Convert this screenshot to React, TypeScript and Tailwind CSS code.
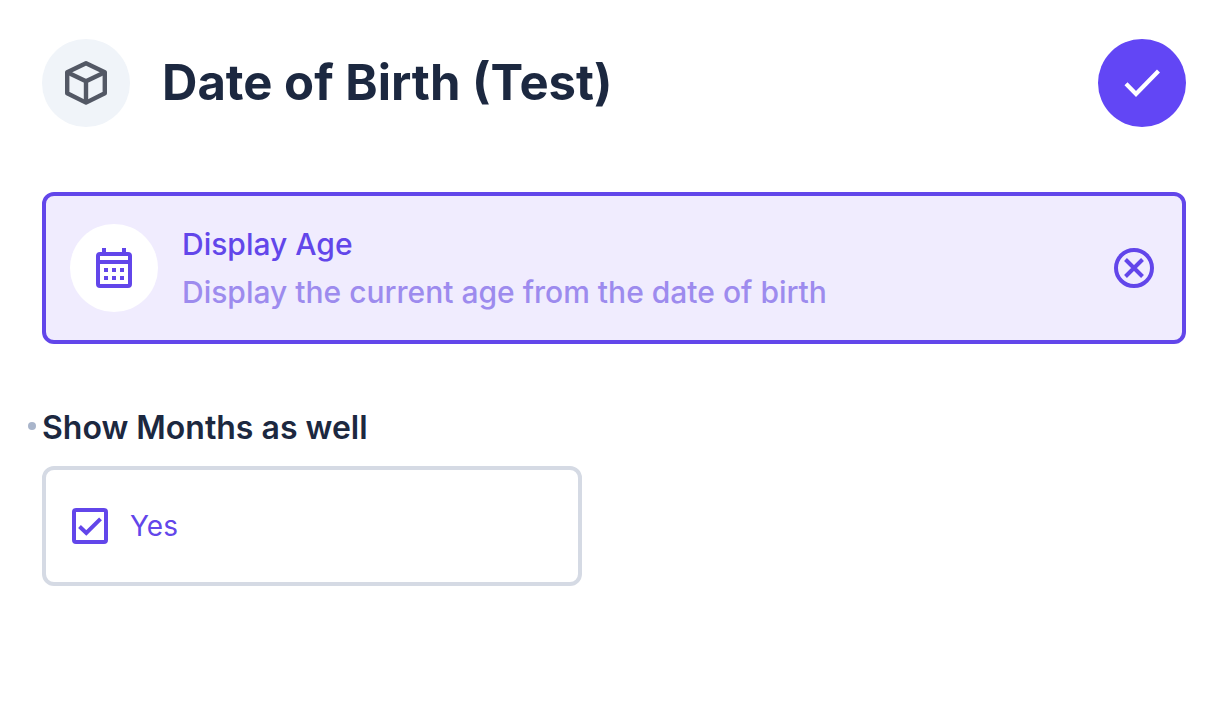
import { useState } from "react";

function CubeIcon() {
  return (
    <svg viewBox="0 0 44 46" className="h-[46px] w-11" fill="none" stroke="#535865" strokeWidth="4.4" strokeLinejoin="round" aria-hidden="true">
      <path d="M22 3.3 40.8 12.3V33.2L22 42.6 3.2 33.2V12.3Z" />
      <path d="M3.2 12.3 22 21.3 40.8 12.3M22 21.3V42.6" />
    </svg>
  );
}

function CheckIcon() {
  return (
    <svg viewBox="0 0 44 44" className="size-11" fill="none" stroke="#fff" strokeWidth="4.2" aria-hidden="true">
      <path d="M6 22.8 16 33 38.5 10" />
    </svg>
  );
}

function CalendarIcon() {
  return (
    <svg viewBox="0 0 36 40" className="h-10 w-9" aria-hidden="true">
      <path
        fill="#6246ea"
        fillRule="evenodd"
        d="M6 0h4v4h16V0h4v4h2a4 4 0 0 1 4 4v28a4 4 0 0 1-4 4H4a4 4 0 0 1-4-4V8a4 4 0 0 1 4-4h2ZM4 8v4h28V8ZM4 16v20h28V16Z"
      />
      <path fill="#6246ea" d="M8 20h4v4H8zM16 20h4v4h-4zM24 20h4v4h-4zM8 28h4v4H8zM16 28h4v4h-4zM24 28h4v4h-4z" />
    </svg>
  );
}

function RemoveIcon() {
  return (
    <svg viewBox="0 0 40 40" className="size-10" fill="none" stroke="#6246ea" strokeWidth="4" aria-hidden="true">
      <circle cx="20" cy="20" r="18" />
      <path d="m11.5 11.5 17 17M28.5 11.5l-17 17" />
    </svg>
  );
}

export default function App() {
  const [showMonths, setShowMonths] = useState(true);

  return (
    <main className="min-h-screen bg-white pt-[39px] pr-[30px] pb-10 pl-[42px] font-['Inter',sans-serif] text-[#1c2840]">
      <header className="flex items-center gap-8">
        <div className="flex size-[88px] shrink-0 items-center justify-center rounded-full bg-[#f0f4f9]">
          <CubeIcon />
        </div>
        <h1 className="flex-1 text-[49px] leading-[52px] font-bold">Date of Birth (Test)</h1>
        <button type="button" aria-label="Save" className="flex size-[88px] shrink-0 items-center justify-center rounded-full bg-[#6246f5]">
          <CheckIcon />
        </button>
      </header>

      <section className="mt-[65px] flex items-center gap-6 rounded-xl border-4 border-[#6246ea] bg-[#f0ecfe] py-6 pr-7 pl-6">
        <div className="flex size-[88px] shrink-0 items-center justify-center rounded-full bg-white">
          <CalendarIcon />
        </div>
        <div className="flex-1 text-[30px] leading-[48px] font-medium">
          <h2 className="text-[#6246ea]">Display Age</h2>
          <p className="text-[#9d8bee]">Display the current age from the date of birth</p>
        </div>
        <button type="button" aria-label="Remove Display Age" className="shrink-0">
          <RemoveIcon />
        </button>
      </section>

      <fieldset className="mt-16">
        <legend className="relative text-[32px] leading-10 font-semibold">
          <span className="absolute top-[14px] -left-[14px] size-2 rounded-full bg-[#a9b5cb]" />
          Show Months as well
        </legend>
        <label className="mt-[18px] flex h-[120px] w-full max-w-[540px] items-center gap-[22px] rounded-xl border-4 border-[#d5dae4] px-[26px] text-[28px] text-[#6246ea]">
          <span className="grid size-9 place-items-center">
            <input
              type="checkbox"
              checked={showMonths}
              onChange={(event) => setShowMonths(event.target.checked)}
              className="peer col-start-1 row-start-1 size-9 appearance-none rounded border-4 border-[#6246ea]"
            />
            <svg
              viewBox="0 0 36 36"
              className="pointer-events-none invisible col-start-1 row-start-1 size-9 peer-checked:visible"
              fill="none"
              stroke="#6246ea"
              strokeWidth="4"
              aria-hidden="true"
            >
              <path d="m7.5 18.5 6.8 6.5L28.5 10.8" />
            </svg>
          </span>
          Yes
        </label>
      </fieldset>
    </main>
  );
}
